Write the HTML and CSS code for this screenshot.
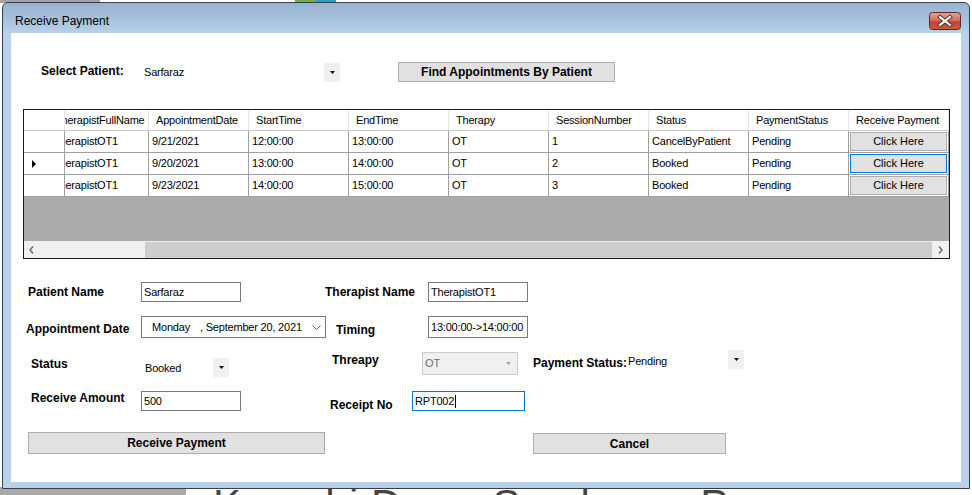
FILE: index.html
```html
<!DOCTYPE html>
<html>
<head>
<meta charset="utf-8">
<title>Receive Payment</title>
<link rel="stylesheet" href="styles.css">
</head>
<body>
<div class="desktop">
  <div class="bg-top"><span class="bg-gray"></span><span class="bg-green"></span><span class="bg-blue"></span></div>
  <div class="bg-bottom"><span class="bg-gray2"></span><span class="bg-text">Karachi Down Syndrome Program</span></div>

  <div class="window">
    <div class="titlebar">
      <span class="title">Receive Payment</span>
      <span class="close">
        <svg width="32" height="18" viewBox="0 0 32 18">
          <defs>
            <linearGradient id="cg" x1="0" y1="0" x2="0" y2="1">
              <stop offset="0" stop-color="#e8a493"/>
              <stop offset="0.45" stop-color="#d3725f"/>
              <stop offset="0.55" stop-color="#c2432f"/>
              <stop offset="1" stop-color="#cc5a3c"/>
            </linearGradient>
          </defs>
          <rect x="0.5" y="0.5" width="31" height="17" rx="3" fill="url(#cg)" stroke="#5b2a28"/>
          <path d="M11 5 L21 13 M21 5 L11 13" stroke="#4a3030" stroke-width="4" stroke-linecap="square"/>
          <path d="M11 5 L21 13 M21 5 L11 13" stroke="#ffffff" stroke-width="2.2" stroke-linecap="square"/>
        </svg>
      </span>
    </div>

    <div class="client">
      <div class="row-select">
        <span class="lbl lbl-select">Select Patient:</span>
        <span class="combo combo-patient"><span class="combo-text">Sarfaraz</span><span class="dd-btn"><svg width="5" height="3" viewBox="0 0 5 3"><path d="M0 0 H5 L2.5 3 Z" fill="#000"/></svg></span></span>
        <span class="btn btn-find">Find Appointments By Patient</span>
      </div>

      <div class="dgv">
        <div class="dg-table">
          <div class="hc hc-corner"></div>
          <div class="hc hc-first"><span class="shift-h">TherapistFullName</span></div>
          <div class="hc">AppointmentDate</div>
          <div class="hc">StartTime</div>
          <div class="hc">EndTime</div>
          <div class="hc">Therapy</div>
          <div class="hc">SessionNumber</div>
          <div class="hc">Status</div>
          <div class="hc">PaymentStatus</div>
          <div class="hc">Receive Payment</div>

          <div class="rh"></div>
          <div class="c c-first"><span class="shift-c">TherapistOT1</span></div>
          <div class="c">9/21/2021</div>
          <div class="c">12:00:00</div>
          <div class="c">13:00:00</div>
          <div class="c">OT</div>
          <div class="c">1</div>
          <div class="c">CancelByPatient</div>
          <div class="c">Pending</div>
          <div class="c c-btn"><span class="cell-btn">Click Here</span></div>

          <div class="rh"><span class="row-arrow"></span></div>
          <div class="c c-first"><span class="shift-c">TherapistOT1</span></div>
          <div class="c">9/20/2021</div>
          <div class="c">13:00:00</div>
          <div class="c">14:00:00</div>
          <div class="c">OT</div>
          <div class="c">2</div>
          <div class="c">Booked</div>
          <div class="c">Pending</div>
          <div class="c c-btn"><span class="cell-btn cell-btn-focus">Click Here</span></div>

          <div class="rh"></div>
          <div class="c c-first"><span class="shift-c">TherapistOT1</span></div>
          <div class="c">9/23/2021</div>
          <div class="c">14:00:00</div>
          <div class="c">15:00:00</div>
          <div class="c">OT</div>
          <div class="c">3</div>
          <div class="c">Booked</div>
          <div class="c">Pending</div>
          <div class="c c-btn"><span class="cell-btn">Click Here</span></div>
        </div>
        <div class="dg-empty"></div>
        <div class="dg-scroll">
          <span class="sc-arrow sc-left"><svg width="5" height="8" viewBox="0 0 5 8"><path d="M4 0.5 L1 4 L4 7.5" fill="none" stroke="#606060" stroke-width="1.3"/></svg></span>
          <span class="sc-thumb"></span>
          <span class="sc-arrow sc-right"><svg width="5" height="8" viewBox="0 0 5 8"><path d="M1 0.5 L4 4 L1 7.5" fill="none" stroke="#606060" stroke-width="1.3"/></svg></span>
        </div>
      </div>

      <div class="frow frow-a">
        <span class="lbl w-113 ml-17">Patient Name</span>
        <span class="tb w-100 h-20">Sarfaraz</span>
        <span class="lbl w-103 ml-84">Therapist Name</span>
        <span class="tb w-100 h-20">TherapistOT1</span>
      </div>

      <div class="frow frow-b">
        <span class="lbl lbl-22 w-115 ml-15 mt-2">Appointment Date</span>
        <span class="dtp">
          <span class="dtp-day">Monday</span><span class="dtp-date">, September 20, 2021</span>
          <span class="dtp-chev"><svg width="9" height="5" viewBox="0 0 9 5"><path d="M0.5 0.5 L4.5 4.5 L8.5 0.5" fill="none" stroke="#606060" stroke-width="1"/></svg></span>
        </span>
        <span class="lbl lbl-22 w-92 ml-10 mt-3">Timing</span>
        <span class="tb w-100 h-22">13:00:00-&gt;14:00:00</span>
      </div>

      <div class="frow frow-c">
        <span class="lbl w-110 ml-20 mt-4">Status</span>
        <span class="combo combo-status"><span class="combo-text">Booked</span><span class="dd-btn"><svg width="5" height="3" viewBox="0 0 5 3"><path d="M0 0 H5 L2.5 3 Z" fill="#000"/></svg></span></span>
        <span class="lbl w-90 ml-103">Threapy</span>
        <span class="combo-dis"><span class="combo-dis-text">OT</span><svg width="5" height="3" viewBox="0 0 5 3"><path d="M0 0 H5 L2.5 3 Z" fill="#a0a0a0"/></svg></span>
        <span class="lbl w-95 ml-15 mt-3">Payment Status:</span>
        <span class="combo combo-pay"><span class="combo-text">Pending</span><span class="dd-btn"><svg width="5" height="3" viewBox="0 0 5 3"><path d="M0 0 H5 L2.5 3 Z" fill="#000"/></svg></span></span>
      </div>

      <div class="frow frow-d">
        <span class="lbl w-110 ml-20">Receive Amount</span>
        <span class="tb w-100 h-20 mt-3">500</span>
        <span class="lbl w-82 ml-89 mt-7">Receipt No</span>
        <span class="tb tb-focus w-113 h-20 mt-3">RPT002<span class="caret"></span></span>
      </div>

      <div class="frow frow-e">
        <span class="btn btn-recv">Receive Payment</span>
        <span class="btn btn-cancel">Cancel</span>
      </div>
    </div>
  </div>
</div>
</body>
</html>
```

FILE: styles.css
```css
* { box-sizing: border-box; }
html, body { margin: 0; padding: 0; }
body {
  width: 972px;
  height: 495px;
  overflow: hidden;
  background: #ffffff;
  font-family: "Liberation Sans", Arial, sans-serif;
  font-size: 11px;
  color: #000;
}
.desktop { position: relative; width: 972px; height: 495px; overflow: hidden; }

/* desktop behind the dialog */
.bg-top { position: absolute; left: 0; top: 0; width: 972px; height: 3px; display: flex; }
.bg-gray { width: 100px; background: #a3a3a3; }
.bg-green { margin-left: 195px; width: 21px; background: #6cb33f; }
.bg-blue { width: 20px; background: #2a9ad9; }
.bg-bottom { position: absolute; left: 0; top: 487px; width: 972px; height: 8px; overflow: hidden; display: flex; }
.bg-gray2 { width: 186px; flex: none; background: #a8a8a8; }
.bg-text { font-size: 42px; line-height: 42px; margin-top: -3px; margin-left: 27px; color: #444; white-space: nowrap; letter-spacing: 0.5px; }

/* window */
.window {
  position: absolute;
  left: 2px;
  top: 2px;
  width: 968px;
  height: 487px;
  border: 1px solid #34404c;
  border-radius: 6px 6px 0 0;
  background: linear-gradient(#98b3d0 0, #a9c3de 18px, #b8d0e9 30px, #b9d1ea 31px);
  padding: 0 8px 6px 8px;
  display: flex;
  flex-direction: column;
}
.titlebar { height: 30px; flex: none; display: flex; justify-content: space-between; align-items: flex-start; }
.title { padding-top: 11px; padding-left: 4px; font-size: 12px; line-height: 14px; color: #000; }
.close { margin-top: 9px; width: 32px; height: 18px; display: block; }
.close svg { display: block; }

.client { flex: none; width: 950px; height: 449px; background: #fff; display: flex; flex-direction: column; }

/* generic */
.lbl { font-weight: bold; font-size: 12px; line-height: 20px; height: 20px; white-space: nowrap; flex: none; }
.lbl-22 { line-height: 22px; height: 22px; }
.btn {
  flex: none;
  display: flex;
  align-items: center;
  justify-content: center;
  background: #e1e1e1;
  border: 1px solid #adadad;
  font-weight: bold;
  font-size: 12px;
  white-space: nowrap;
}
.tb {
  flex: none;
  display: flex;
  align-items: center;
  border: 1px solid #7a7a7a;
  background: #fff;
  padding-left: 2px;
  font-size: 11px;
  letter-spacing: -0.2px;
  white-space: nowrap;
  overflow: hidden;
}
.tb-focus { border-color: #0078d7; }
.caret { display: inline-block; width: 1px; height: 13px; background: #000; margin-left: 1px; }

.combo { flex: none; display: flex; align-items: flex-start; justify-content: space-between; background: #fff; }
.combo-text { font-size: 11px; letter-spacing: -0.2px; white-space: nowrap; }
.dd-btn { width: 16px; height: 19px; background: #f0f0f0; display: flex; align-items: center; justify-content: center; flex: none; }
.dd-btn svg { display: block; }

/* select patient row */
.row-select { display: flex; align-items: flex-start; margin-top: 29px; height: 19px; flex: none; }
.lbl-select { margin-left: 30px; width: 100px; line-height: 19px; height: 19px; }
.combo-patient { width: 199px; height: 19px; }
.combo-patient .combo-text { padding-left: 3px; line-height: 21px; }
.combo-patient .dd-btn { margin-top: 1px; }
.btn-find { margin-left: 58px; width: 217px; height: 20px; }

/* data grid */
.dgv {
  flex: none;
  margin-top: 28px;
  margin-left: 12px;
  width: 927px;
  height: 150px;
  border: 1px solid #1c1c1c;
  display: flex;
  flex-direction: column;
  overflow: hidden;
}
.dg-table {
  display: grid;
  grid-template-columns: 41px 84px repeat(8, 100px);
  grid-template-rows: 21px 22px 22px 22px;
  flex: none;
}
.hc {
  background: #fff;
  border-right: 1px solid #e5e5e5;
  border-bottom: 1px solid #c8c8c8;
  padding-left: 7px;
  line-height: 20px;
  white-space: nowrap;
  overflow: hidden;
  letter-spacing: -0.2px;
}
.hc-corner { padding: 0; }
.hc-first { padding-left: 0; }
.shift-h { display: inline-block; margin-left: -10px; }
.c {
  background: #fff;
  border-right: 1px solid #a0a0a0;
  border-bottom: 1px solid #a0a0a0;
  padding-left: 3px;
  line-height: 21px;
  white-space: nowrap;
  overflow: hidden;
  letter-spacing: -0.2px;
}
.c-first { padding-left: 0; }
.shift-c { display: inline-block; margin-left: -12px; }
.rh {
  background: #fff;
  border-right: 1px solid #a0a0a0;
  border-bottom: 1px solid #a0a0a0;
  display: flex;
  align-items: center;
  padding-left: 8px;
}
.row-arrow { width: 0; height: 0; border-left: 4px solid #000; border-top: 4px solid transparent; border-bottom: 4px solid transparent; }
.c-btn { padding: 1px; }
.cell-btn {
  display: flex;
  align-items: center;
  justify-content: center;
  height: 19px;
  background: #e1e1e1;
  border: 1px solid #adadad;
  letter-spacing: 0;
}
.cell-btn-focus { border: 1px solid #0078d7; box-shadow: inset 0 0 0 1px #cfe3f5; }
.dg-empty { height: 44px; flex: none; background: #ababab; }
.dg-scroll { height: 17px; flex: none; background: #f0f0f0; display: flex; align-items: flex-start; }
.sc-arrow { width: 17px; height: 17px; display: flex; align-items: center; justify-content: center; flex: none; }
.sc-left { margin-left: 0; width: 121px; justify-content: flex-start; padding-left: 5px; }
.sc-thumb { width: 787px; height: 16px; margin-top: 1px; background: #cdcdcd; flex: none; }
.sc-arrow svg { display: block; }

/* form rows */
.frow { display: flex; align-items: flex-start; flex: none; }
.frow-a { margin-top: 23px; height: 20px; }
.frow-b { margin-top: 14px; height: 22px; }
.frow-c { margin-top: 12px; height: 27px; }
.frow-d { margin-top: 11px; height: 27px; }
.frow-e { margin-top: 17px; height: 22px; }

.w-82 { width: 82px; }
.w-90 { width: 90px; }
.w-92 { width: 92px; }
.w-95 { width: 95px; }
.w-100 { width: 100px; }
.w-103 { width: 103px; }
.w-110 { width: 110px; }
.w-113 { width: 113px; }
.w-115 { width: 115px; }
.h-20 { height: 20px; }
.h-22 { height: 22px; }
.ml-10 { margin-left: 10px; }
.ml-15 { margin-left: 15px; }
.ml-17 { margin-left: 17px; }
.ml-20 { margin-left: 20px; }
.ml-84 { margin-left: 84px; }
.ml-89 { margin-left: 89px; }
.ml-103 { margin-left: 103px; }
.mt-2 { margin-top: 2px; }
.mt-3 { margin-top: 3px; }
.mt-4 { margin-top: 4px; }
.mt-7 { margin-top: 7px; }

.dtp {
  flex: none;
  width: 185px;
  height: 22px;
  border: 1px solid #7a7a7a;
  display: flex;
  align-items: center;
  padding-left: 10px;
  font-size: 11px;
  letter-spacing: -0.2px;
  white-space: nowrap;
}
.dtp-day { width: 48px; flex: none; }
.dtp-date { flex: 1; }
.dtp-chev { width: 9px; margin-right: 4px; display: flex; align-items: center; }
.dtp-chev svg { display: block; }

.combo-status { width: 88px; height: 19px; margin-top: 8px; }
.combo-status .combo-text { padding-left: 4px; line-height: 20px; }
.combo-pay { width: 116px; height: 19px; }
.combo-pay .combo-text { line-height: 22px; }

.combo-dis {
  flex: none;
  width: 96px;
  height: 23px;
  margin-top: 2px;
  border: 1px solid #cccccc;
  background: #f0f0f0;
  display: flex;
  align-items: center;
  justify-content: space-between;
  padding: 0 6px 0 2px;
  color: #6d6d6d;
  font-size: 11px;
}
.combo-dis svg { display: block; }
.combo-dis-text { line-height: 21px; }

.btn-recv { margin-left: 17px; width: 297px; height: 22px; }
.btn-cancel { margin-left: 208px; width: 193px; height: 21px; margin-top: 1px; }
```
